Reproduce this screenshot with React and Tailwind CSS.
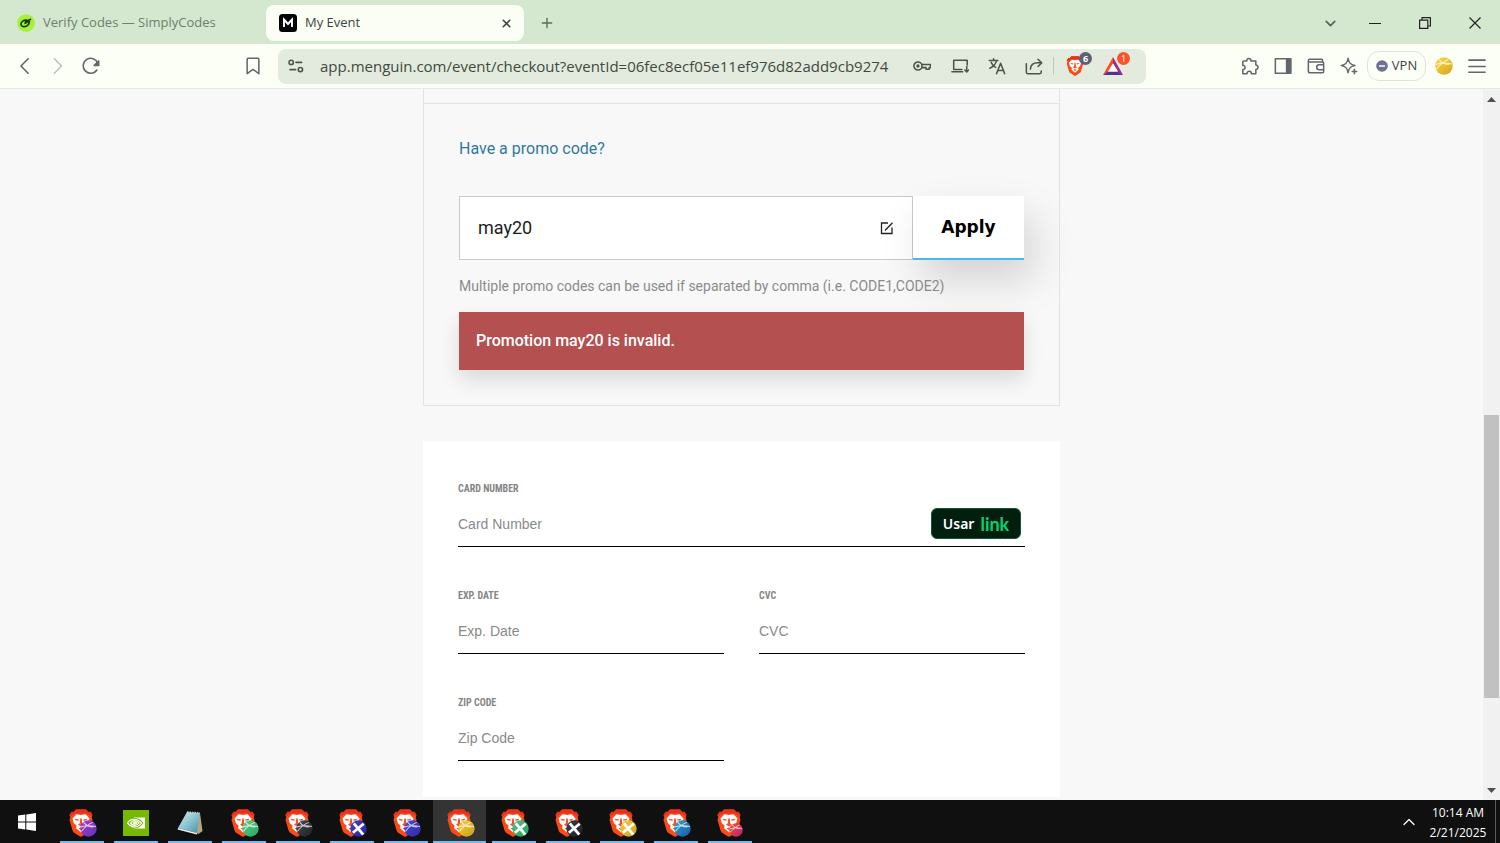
import React, { useState } from "react";
import { ChevronDown, ChevronUp, Plus, X } from "lucide-react";

const CHROME_FONT = "font-['Open_Sans',sans-serif]";

const TASKS = [
  { id: "purple", kind: "brave", from: "#b03bc4", to: "#5b35c0" },
  { id: "nvidia", kind: "nvidia" },
  { id: "notepad", kind: "notepad" },
  { id: "green", kind: "brave", from: "#5fd08f", to: "#27a25c" },
  { id: "dark", kind: "brave", from: "#4a4d55", to: "#1c1e24" },
  { id: "blue-x", kind: "brave", from: "#3b3fd0", to: "#2a23a0", cross: true },
  { id: "indigo", kind: "brave", from: "#4b47d6", to: "#2f2aa6" },
  { id: "yellow", kind: "brave", from: "#f5d63c", to: "#c99a16", active: true },
  { id: "green-x", kind: "brave", from: "#4cc98a", to: "#1f9d5b", cross: true },
  { id: "dark-x", kind: "brave", from: "#3d4048", to: "#1c1e24", cross: true },
  { id: "yellow-x", kind: "brave", from: "#efcf3f", to: "#cfa01d", cross: true },
  { id: "sky", kind: "brave", from: "#2aa6c9", to: "#1a56a8" },
  { id: "red", kind: "brave", from: "#f0553c", to: "#b81f6b", small: true },
];

function Lion({ className }) {
  return (
    <svg viewBox="0 0 24 28" className={className} aria-hidden="true">
      <path d="M7 .5h10l2.400 2.600 2-.3 2.100 3.200-.8 2.300.8 2.600-3 10.300c-.4 1.300-1 2-2 2.700L12.800 27.600c-.5.3-1.100.3-1.600 0L5.500 23.900c-1-.7-1.600-1.400-2-2.700L.5 10.900l.8-2.600L.5 6l2.100-3.200 2 .3z" fill="#fb4a16" />
      <path d="M7 .5h10l2.400 2.600 2-.3 2.100 3.200-1.500 1-4-2.400H6L2 7 .5 6l2.100-3.200 2 .3z" fill="#e8301c" />
      <path d="M7.500 5.200 12 6l4.500-.8 4 4.400-1.400 4.600-2.700 2.200.5 2.800-2.400 2L12 23.400l-2.500-2.200-2.400-2 .5-2.800-2.700-2.200-1.400-4.600z" fill="#fff" />
      <path d="M5.800 9.800 10 10.600l-.6 1.200-3-.5zM18.200 9.800 14 10.600l.6 1.200 3-.5zM11.200 9.500h1.600l.4 4.700 1.800 1.600-3 1.700-3-1.700 1.800-1.600zM9.500 19.400l2.500-1 2.500 1-2.500 1.600z" fill="#f4502b" />
    </svg>
  );
}

function Ball({ id, from, to, cross, className }) {
  return (
    <svg viewBox="0 0 18 18" className={className} aria-hidden="true">
      <defs>
        <linearGradient id={`ball-${id}`} x1="0" y1="0" x2="1" y2="1">
          <stop offset="0" stopColor={from} />
          <stop offset="1" stopColor={to} />
        </linearGradient>
      </defs>
      <circle cx="9" cy="9" r="8.700" fill={`url(#ball-${id})`} />
      {cross ? (
        <path d="M4 3.500l10 12M14.500 4 3 13.500" stroke="#fff" strokeWidth="3" />
      ) : (
        <path d="M.8 7.500Q8 5 17 7M1.500 12Q7 5 13.500 2.500M4 2.500q4 5 10 5" stroke="#fff" strokeOpacity=".75" strokeWidth="1.100" fill="none" />
      )}
    </svg>
  );
}

function TaskIcon({ task }) {
  if (task.kind === "nvidia") {
    return (
      <svg viewBox="0 0 26 26" className="h-[26px] w-[26px]" aria-hidden="true">
        <path d="M0 0h26v26H0z" fill="#76b900" />
        <path d="M11 7.500h11v11H11z" fill="#fff" />
        <path d="M4 13c3-5 8-6 12-4 2 1 3.500 2.500 4.500 4-3 4-6 5.500-9.500 5.500-3.500-.3-5.500-2.500-7-5.500z" fill="#76b900" />
        <path d="M4.500 13c3-4.500 9-5.500 14 0-3.500 5-9.500 5.500-14 0zM7.500 13c2-3 5.500-3.500 8.500 0-2.500 3.200-6 3-8.500 0zM10.500 13c1-1.200 2-1.200 3 0-1 1.200-2 1.200-3 0z" fill="none" stroke="#fff" strokeWidth="1.200" />
      </svg>
    );
  }
  if (task.kind === "notepad") {
    return (
      <svg viewBox="0 0 26 26" className="h-[26px] w-[26px]" aria-hidden="true">
        <defs>
          <linearGradient id="pad" x1="0" y1="0" x2="1" y2="1">
            <stop offset="0" stopColor="#d8eef2" />
            <stop offset=".5" stopColor="#8cc3d2" />
            <stop offset="1" stopColor="#3f91a9" />
          </linearGradient>
        </defs>
        <path d="M23 3l2.500 18-4 3-4-2z" fill="#b9a580" />
        <path d="M10 2l13 1-3 20L1 18z" fill="url(#pad)" />
        <path d="M1 18l19 5-.3 1.600L.6 19.500z" fill="#e9f2f4" />
        <path d="M10 2l13 1" stroke="#c6cdd0" strokeWidth="1.500" strokeDasharray="1.500 1" />
      </svg>
    );
  }
  return (
    <span className="relative block h-7 w-[26px]">
      <Lion className="h-7 w-6" />
      <Ball
        {...task}
        className={
          task.small
            ? "absolute right-0 bottom-0 h-3.5 w-3.5"
            : "absolute -right-0.5 bottom-0 h-[17px] w-[17px]"
        }
      />
    </span>
  );
}

function IconButton({ label, className = "", children }) {
  return (
    <button
      type="button"
      aria-label={label}
      className={`flex h-7 shrink-0 items-center justify-center ${className}`}
    >
      {children}
    </button>
  );
}

function Stroke({ className = "h-[18px] w-[18px]", width = 1.7, children }) {
  return (
    <svg
      viewBox="0 0 20 20"
      className={className}
      fill="none"
      stroke="currentColor"
      strokeWidth={width}
      strokeLinecap="round"
      strokeLinejoin="round"
      aria-hidden="true"
    >
      {children}
    </svg>
  );
}

function TabStrip() {
  return (
    <header className={`flex h-11 shrink-0 items-center bg-[#d3e8cf] pt-0.5 text-[13px] ${CHROME_FONT}`}>
      <button type="button" className="flex h-9 w-[262px] items-center gap-2 pl-[17px] text-[#6f7f6e]">
        <svg viewBox="0 0 18 18" className="h-[18px] w-[18px]" aria-hidden="true">
          <circle cx="9" cy="9" r="8.800" fill="#a4f03a" />
          <path d="M10.500 6.300C7 5.300 3.500 8 4 10.600c.4 2.400 4 2.700 6.300 1 1.800-1.300 2.500-3.600 1.300-4.500L7.500 9.800M8 8.500l6-3.500M13 6.500l-2 2" fill="none" stroke="#1c3a10" strokeWidth="1.700" />
        </svg>
        Verify Codes — SimplyCodes
      </button>
      <div className="ml-1 flex h-9 w-[258px] items-center rounded-lg bg-[#fafef4] pr-2 pl-[13px] text-[#3c4540]">
        <svg viewBox="0 0 18 18" className="h-[18px] w-[18px]" aria-hidden="true">
          <rect width="18" height="18" rx="3.500" fill="#000" />
          <path d="M5 13V5.500l4 4.500 4-4.500V13" fill="none" stroke="#fff" strokeWidth="1.900" />
        </svg>
        <span className="ml-2 flex-1">My Event</span>
        <IconButton label="Close tab" className="w-5">
          <X size={13} strokeWidth={3} />
        </IconButton>
      </div>
      <IconButton label="New tab" className="ml-[7px] w-8 text-[#5d6a5c]">
        <Plus size={16} strokeWidth={2} />
      </IconButton>
      <div className="ml-auto flex text-[#222]">
        <IconButton label="Search tabs" className="w-10 text-[#5b6660]">
          <ChevronDown size={17} strokeWidth={2.500} />
        </IconButton>
        <IconButton label="Minimize" className="w-[50px]">
          <svg viewBox="0 0 12 12" className="h-3 w-3"><path d="M0 6.500h12" stroke="currentColor" /></svg>
        </IconButton>
        <IconButton label="Restore" className="w-[50px]">
          <svg viewBox="0 0 12 12" className="h-3 w-3" fill="none" stroke="currentColor" strokeWidth="1.200">
            <path d="M.6 3.200h8.200v8.200H.6zM3 3V.6h8.400V9H9" />
          </svg>
        </IconButton>
        <IconButton label="Close window" className="w-[50px]">
          <svg viewBox="0 0 12 12" className="h-3 w-3"><path d="M.5.5l11 11M11.500.5l-11 11" stroke="currentColor" strokeWidth="1.200" /></svg>
        </IconButton>
      </div>
    </header>
  );
}

function AddressBar() {
  return (
    <div className="flex h-[35px] min-w-0 flex-1 items-center rounded-lg bg-[#e3ebde] pr-5 pl-1.5 text-[#4b554b]">
      <IconButton label="Site information" className="w-6">
        <Stroke className="h-4 w-4" width={2}>
          <circle cx="4" cy="5.500" r="2.700" />
          <path d="M10 5.500h7M2.500 14.500h7" />
          <circle cx="15.500" cy="14.500" r="2.700" />
        </Stroke>
      </IconButton>
      <input
        aria-label="Address"
        defaultValue="app.menguin.com/event/checkout?eventId=06fec8ecf05e11ef976d82add9cb9274"
        className="ml-3 min-w-0 flex-1 bg-transparent text-[15px] text-[#3f4a40] outline-none"
      />
      <IconButton label="Passwords" className="w-[38px]">
        <Stroke>
          <circle cx="5.500" cy="10" r="4.500" />
          <circle cx="5.500" cy="10" r="1" fill="currentColor" />
          <path d="M10 8.300h9.500v3.500H18v1.700h-3.500v-1.700H10" />
        </Stroke>
      </IconButton>
      <IconButton label="Install app" className="w-[38px]">
        <Stroke>
          <path d="M18 9V3.500H3V14M1 16.500h12M3 14h9M17.500 10.500v6M15.300 14.500l2.200 2.200 2.200-2.200" />
        </Stroke>
      </IconButton>
      <IconButton label="Translate" className="w-9">
        <Stroke>
          <path d="M1.500 4h9.500M6.200 2v2M9.500 4c-1 4-4 7-7.500 8.500M3.500 6c1 2.500 3 4.500 5 5.500M9.500 18.500 14 7l4.500 11.500M11 15h6" />
        </Stroke>
      </IconButton>
      <IconButton label="Share" className="w-[38px]">
        <Stroke>
          <path d="M1.500 7.500v9.500c0 1 .5 1.500 1.500 1.500h13.500c1 0 1.500-.5 1.500-1.500v-1.500M6 13.500c.3-4.500 3.500-7 8-7h4M14.500 2.500l4 4-4 4" />
        </Stroke>
      </IconButton>
      <span className="mr-2 h-[18px] w-px bg-[#c0c8bc]" />
      <IconButton label="Brave Shields" className="relative w-[26px]">
        <Lion className="h-5 w-[18px]" />
        <span className="absolute top-0 -right-1 flex h-[13px] w-[13px] items-center justify-center rounded-full bg-[#5d6273] text-[9px] font-bold text-white">
          6
        </span>
      </IconButton>
      <IconButton label="Brave Rewards" className="relative ml-3 w-[26px]">
        <svg viewBox="0 0 20 18" className="h-[18px] w-5" aria-hidden="true">
          <path d="M10 0 0 18l5-3 5-8.500z" fill="#ff4a24" />
          <path d="M10 0l10 18-5-3-5-8.500z" fill="#9d2d86" />
          <path d="M0 18h20l-5-3.500H5z" fill="#5b2d91" />
          <path d="M10 6.500 5 14.500h10z" fill="#fff" />
        </svg>
        <span className="absolute top-0 -right-1 flex h-[13px] w-[13px] items-center justify-center rounded-full bg-[#fb542b] text-[9px] text-white">
          1
        </span>
      </IconButton>
    </div>
  );
}

function Toolbar() {
  return (
    <nav className={`flex h-[45px] shrink-0 items-center border-b border-[#e6e8e3] bg-[#fbfff6] text-[#62666d] ${CHROME_FONT}`}>
      <div className="flex w-[278px] shrink-0 items-center pl-2">
        <IconButton label="Back" className="w-[33px]">
          <Stroke width={1.8}><path d="M13.500 2 5.500 10l8 8" /></Stroke>
        </IconButton>
        <IconButton label="Forward" className="w-[33px] text-[#bcc0bb]">
          <Stroke><path d="M6 2l8 8-8 8" /></Stroke>
        </IconButton>
        <IconButton label="Reload" className="w-[33px]">
          <Stroke width={1.8}>
            <path d="M16.500 14.500A8.300 8.300 0 1 1 17.500 7" />
            <path d="M18.500 4.500v5h-5z" fill="currentColor" />
          </Stroke>
        </IconButton>
        <IconButton label="Bookmark" className="mr-3 ml-auto w-[26px]">
          <Stroke><path d="M4.500 1.500h11c.6 0 1 .4 1 1v16L10 13.800 3.500 18.500v-16c0-.6.4-1 1-1z" /></Stroke>
        </IconButton>
      </div>
      <AddressBar />
      <div className="ml-[87px] flex w-[267px] shrink-0 items-center">
        <IconButton label="Extensions" className="w-[33px]">
          <Stroke>
            <path d="M3 4.500h3.500c-.8-3.500 5-3.800 4.600 0h5.400V9c3.300-.2 3.300 5 0 4.800v4.700H11.500c.5-3.500-5-3.700-4.700 0H2V14c3.300.5 3.500-5 0-4.700V5.500c0-.6.400-1 1-1z" />
          </Stroke>
        </IconButton>
        <IconButton label="Sidebar" className="w-[33px]">
          <Stroke>
            <path d="M1.500 2h17v16h-17z" />
            <path d="M14 2h4.500v16H14z" fill="currentColor" />
          </Stroke>
        </IconButton>
        <IconButton label="Wallet" className="w-[33px]">
          <Stroke>
            <path d="M1.500 4c0-1 .5-1.500 1.500-1.500h13c.8 0 1.300.5 1.300 1.300v1.700H3C2 5.500 1.500 5 1.500 4zV15.500c0 1.200.8 2 2 2H17c.8 0 1.500-.7 1.500-1.500V7c0-.7-.5-1.500-1.200-1.500M18.500 8.700h-5a2.700 2.700 0 0 0 0 5.400h5" />
          </Stroke>
        </IconButton>
        <IconButton label="Leo AI" className="w-[33px]">
          <Stroke>
            <path d="M9 1.500c.8 5 2.500 7 7.500 8-5 1-6.700 3-7.500 8-.8-5-2.500-7-7.500-8 5-1 6.700-3 7.500-8zM16 13.500v5M13.500 16h5" />
          </Stroke>
        </IconButton>
        <button type="button" className="ml-0.5 flex h-[30px] w-[59px] shrink-0 items-center justify-center gap-1 rounded-xl border border-[#dfe2da] text-[13px] text-[#3f4347]">
          <svg viewBox="0 0 12 12" className="h-3 w-3" aria-hidden="true">
            <circle cx="6" cy="6" r="5.800" fill="#6c7191" />
            <path d="M3 6h6" stroke="#fff" strokeWidth="1.500" />
          </svg>
          VPN
        </button>
        <IconButton label="Profile" className="w-[35px]">
          <Ball id="profile" from="#f8dc45" to="#d6a41a" className="h-[18px] w-[18px]" />
        </IconButton>
        <IconButton label="Menu" className="w-8">
          <Stroke width={1.8}><path d="M1 3.500h18M1 10.500h18M1 17h18" /></Stroke>
        </IconButton>
      </div>
    </nav>
  );
}

function PromoSection() {
  const [code, setCode] = useState("may20");

  return (
    <section className="border-x border-b border-[#e3e3e3] font-[Roboto,sans-serif]">
      <div className="h-[15px] border-b border-[#e3e3e3]" />
      <div className="p-[35px]">
        <a href="#promo" className="block text-base leading-5 text-[#31789f]">
          Have a promo code?
        </a>
        <div id="promo" className="mt-[37px] flex h-16">
          <div className="flex flex-1 items-center border border-[#cacaca] bg-white px-[18px]">
            <input
              aria-label="Promo code"
              value={code}
              onChange={(e) => setCode(e.target.value)}
              className="min-w-0 flex-1 bg-transparent text-lg text-[#1c1c1c] outline-none"
            />
            <svg viewBox="0 0 14 14" className="h-3.5 w-3.5" fill="none" stroke="#222" strokeWidth="1.300" aria-hidden="true">
              <path d="M8 2H1.500v10.500H12V6.500M5 9.500 12.500 1.800" />
            </svg>
          </div>
          <button
            type="button"
            className="w-[111px] border-b-2 border-[#4bb8ec] bg-white pt-0.5 font-['DejaVu_Sans',sans-serif] text-[17px] font-bold text-black shadow-[10px_20px_40px_rgba(0,0,0,0.15)]"
          >
            Apply
          </button>
        </div>
        <p className="mt-4 text-sm leading-5 text-[#8b8b8b]">
          Multiple promo codes can be used if separated by comma (i.e. CODE1,CODE2)
        </p>
        <div
          role="alert"
          className="relative mt-4 flex h-[58px] items-center bg-[#b4504f] px-[17px] text-base font-medium text-white shadow-[0_10px_20px_rgba(0,0,0,0.12)]"
        >
          Promotion may20 is invalid.
        </div>
      </div>
    </section>
  );
}

function Field({ id, label, placeholder, className = "", children }) {
  return (
    <div className={className}>
      <label
        htmlFor={id}
        className="block font-['Roboto_Condensed','Open_Sans_Condensed','Liberation_Sans_Narrow',Roboto,sans-serif] text-[10px] leading-5 font-bold text-[#858585] uppercase"
      >
        {label}
      </label>
      <div className="flex h-12 items-center border-b border-black pt-0.5">
        <input
          id={id}
          placeholder={placeholder}
          className="min-w-0 flex-1 bg-transparent font-['Liberation_Sans',sans-serif] text-sm outline-none placeholder:text-[#8a8a8a]"
        />
        {children}
      </div>
    </div>
  );
}

function CardForm() {
  return (
    <form className="mt-[35px] grid grid-cols-2 gap-x-[35px] gap-y-[39px] bg-white px-[35px] pt-[38px] pb-9">
      <Field id="card" label="Card Number" placeholder="Card Number" className="col-span-2">
        <button
          type="button"
          className="mr-1 flex h-[31px] w-[90px] items-center justify-center gap-1.5 rounded-md border border-[#0b5a35] bg-[#011e0f] font-['Noto_Sans',sans-serif] text-sm font-semibold text-white"
        >
          Usar
          <span className="font-[Lato,sans-serif] text-lg leading-5 font-bold text-[#00d66f]">link</span>
        </button>
      </Field>
      <Field id="exp" label="Exp. Date" placeholder="Exp. Date" />
      <Field id="cvc" label="CVC" placeholder="CVC" />
      <Field id="zip" label="Zip Code" placeholder="Zip Code" />
    </form>
  );
}

function Scrollbar() {
  return (
    <div className="flex w-[17px] shrink-0 flex-col items-center bg-[#f1f1f1]" aria-hidden="true">
      <svg viewBox="0 0 17 20" className="h-5 w-[17px]"><path d="M4 13h9L8.500 8z" fill="#505050" /></svg>
      <div className="grow-[306]" />
      <div className="w-[15px] grow-[283] bg-[#c1c1c1]" />
      <div className="grow-[82]" />
      <svg viewBox="0 0 17 20" className="h-5 w-[17px]"><path d="M4 8h9l-4.500 5z" fill="#505050" /></svg>
    </div>
  );
}

function Taskbar() {
  return (
    <footer className="flex h-[43px] shrink-0 bg-[#101010] font-['Open_Sans',sans-serif] text-white">
      <button type="button" aria-label="Start" className="flex w-[55px] items-center pl-[18px]">
        <svg viewBox="0 0 18 18" className="h-[18px] w-[18px]" fill="#fff" aria-hidden="true">
          <path d="M0 2.500 7.300 1.500v7H0zM8.300 1.400 18 0v8.500H8.300zM0 9.500h7.300v7L0 15.500zM8.300 9.500H18V18l-9.700-1.400z" />
        </svg>
      </button>
      <div className="flex gap-px">
        {TASKS.map((task) => (
          <button
            key={task.id}
            type="button"
            aria-label={task.id}
            className={`flex w-[53px] flex-col items-center ${task.active ? "bg-[#343434]" : ""}`}
          >
            <span className="flex flex-1 items-center pt-1">
              <TaskIcon task={task} />
            </span>
            <span className={`h-0.5 bg-[#76b9ed] ${task.active ? "w-full" : "w-11"}`} />
          </button>
        ))}
      </div>
      <div className="ml-auto flex items-center">
        <ChevronUp size={20} strokeWidth={1.5} />
        <div className="ml-2 w-[62px] pt-0.5 text-center text-xs leading-5">
          10:14 AM
          <br />
          2/21/2025
        </div>
        <span className="mr-1 ml-1.5 h-full w-px bg-[#5a5a5a]" />
      </div>
    </footer>
  );
}

export default function App() {
  return (
    <div className="flex h-screen flex-col overflow-hidden">
      <TabStrip />
      <Toolbar />
      <div className="flex min-h-0 flex-1 bg-[#f8f8f8]">
        <main className="min-w-0 flex-1 overflow-hidden">
          <div className="mx-auto max-w-[637px]">
            <PromoSection />
            <CardForm />
          </div>
        </main>
        <Scrollbar />
      </div>
      <Taskbar />
    </div>
  );
}
